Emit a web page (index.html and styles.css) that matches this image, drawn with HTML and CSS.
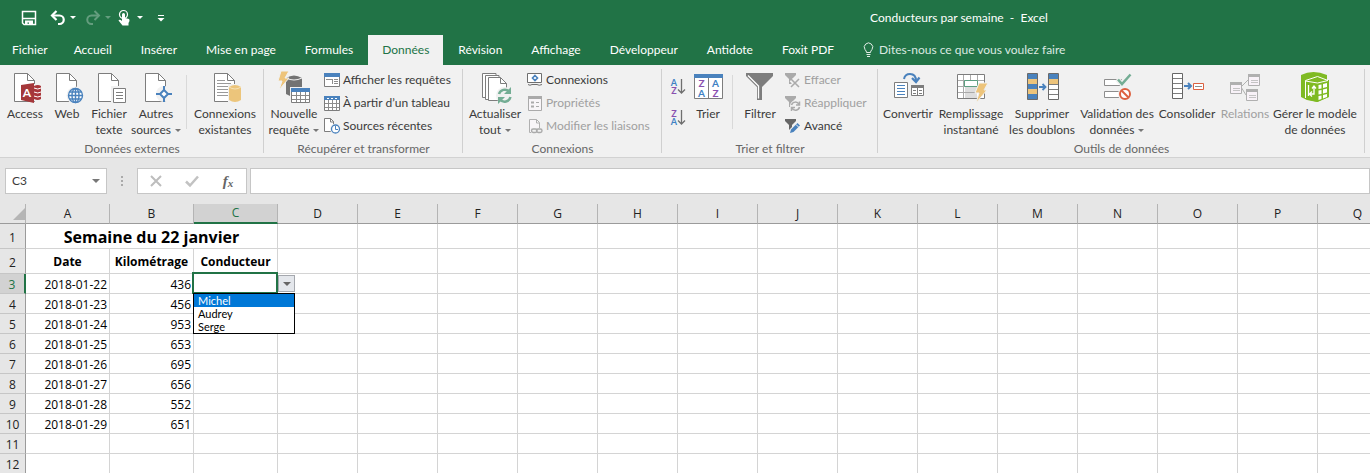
FILE: index.html
```html
<!DOCTYPE html>
<html lang="fr">
<head>
<meta charset="utf-8">
<title>Conducteurs par semaine - Excel</title>
<link rel="stylesheet" href="styles.css">
</head>
<body>
<svg class="defs" aria-hidden="true">
  <symbol id="page" viewBox="0 0 32 32"><path d="M5.500 1.500H18.500L25.500 8.500V29.500H5.500Z" fill="#fff" stroke="#7d7d7d"/><path d="M18.500 1.500V8.500H25.500" fill="none" stroke="#7d7d7d"/></symbol>
</svg>
<header class="top">
  <div class="titlebar">
    <div class="quick">
      <button aria-label="Enregistrer"><svg width="16" height="16"><path d="M1.500 1.500H14.500V14.500H3L1.500 13Z" fill="none" stroke="#fff" stroke-width="1.500"/><path d="M2 8.500H14" stroke="#fff" stroke-width="1.500"/><path d="M4 10.500H12V15H8V12.500H6.500V15H4Z" fill="#fff"/></svg></button>
      <button class="undo" aria-label="Annuler"><svg width="16" height="16"><path d="M2 5.500H9.500A4.200 4.200 0 0 1 9.500 14H8" fill="none" stroke="#fff" stroke-width="2.200"/><path d="M6.500 1 2 5.500 6.500 10" fill="none" stroke="#fff" stroke-width="2.200"/></svg><i class="tri"></i></button>
      <button class="redo" disabled aria-label="Rétablir"><svg width="16" height="16"><path d="M14 5.500H6.500A4.200 4.200 0 0 0 6.500 14H8" fill="none" stroke="#fff" stroke-width="2"/><path d="M9.500 1 14 5.500 9.500 10" fill="none" stroke="#fff" stroke-width="2"/></svg><i class="tri"></i></button>
      <button class="touch" aria-label="Mode tactile"><svg width="16" height="16"><circle cx="6.500" cy="4.500" r="4" fill="none" stroke="#fff" stroke-width="1.200"/><path d="M5 4.500A1.500 1.500 0 0 1 8 4.500V8L12 9Q12.500 9.500 12.500 11L11.500 13V15.500H5.500L1.500 10.500Q2.500 9 5 11Z" fill="#fff"/></svg><i class="tri"></i></button>
      <button class="custom" aria-label="Personnaliser"><svg width="8" height="8"><path d="M1 1.500H7" stroke="#fff"/><path d="M.5 4H7.500L4 7.500Z" fill="#fff"/></svg></button>
    </div>
    <div class="doc">Conducteurs par semaine&nbsp; -&nbsp; Excel</div>
  </div>
  <nav class="tabs">
    <button>Fichier</button><button>Accueil</button><button>Insérer</button><button>Mise en page</button><button>Formules</button><button class="on">Données</button><button>Révision</button><button>Affichage</button><button>Développeur</button><button>Antidote</button><button>Foxit PDF</button>
    <button class="tell"><svg width="11" height="16"><path d="M3.500 10.500Q3.500 9 2 7.500A4.200 4.200 0 1 1 9 7.500Q7.500 9 7.500 10.500Z" fill="none" stroke="#e4eee8"/><path d="M3.500 12.500H7.500M4 14.500H7" stroke="#e4eee8"/></svg>Dites-nous ce que vous voulez faire</button>
  </nav>
</header>

<main>
<section class="ribbon" aria-label="Données">
  <div class="group ext">
    <div class="tools">
      <button class="big"><svg width="32" height="32"><use href="#page"/><rect x="24" y="12" width="10" height="17" fill="#f1f1f1"/><path d="M25 14Q29 12 32 14V27Q29 29 25 27Z" fill="#a9373b"/><path d="M25 16Q29 18 32 16M25 20Q29 22 32 20M25 24Q29 26 32 24" fill="none" stroke="#fff"/><path d="M12 13 25 11V31L12 28Z" fill="#a4373a"/><text x="18" y="25" class="access-a">A</text></svg><span>Access</span></button>
      <button class="big"><svg width="32" height="32"><use href="#page"/><circle cx="24.500" cy="23.500" r="9" fill="#f1f1f1"/><g fill="#fff" stroke="#4a82bd" stroke-width="1.400"><circle cx="24.500" cy="23.500" r="7"/><ellipse cx="24.500" cy="23.500" rx="3.500" ry="7" fill="none"/><path d="M24.500 16.500V30.500M17.500 23.500H31.500M18.500 20H30.500M18.500 27H30.500"/></g></svg><span>Web</span></button>
      <button class="big"><svg width="32" height="32"><use href="#page"/><rect x="18" y="14" width="15" height="18" fill="#f1f1f1"/><path d="M20.500 16.500H32.500V30.500H20.500Z" fill="#fff" stroke="#7d7d7d"/><path d="M23 20.500H30M23 23.500H30M23 26.500H30" stroke="#7d7d7d"/></svg><span>Fichier<br>texte</span></button>
      <button class="big wide"><svg width="32" height="32"><use href="#page"/><circle cx="24" cy="22" r="8" fill="#f1f1f1"/><path d="M24 18 28 22 24 26 20 22Z" fill="#fff" stroke="#4a82bd" stroke-width="2"/><path d="M24 14V18M24 26V30M16 22H20M28 22H32" stroke="#4a82bd" stroke-width="2"/></svg><span>Autres<br>sources<i class="tri"></i></span></button>
      <hr>
      <button class="big exist"><svg width="32" height="32"><use href="#page"/><path d="M8 8.500H16M8 11.500H22M8 14.500H20M8 17.500H19M8 20.500H19M8 23.500H19" stroke="#9a9a9a"/><path d="M19 12H33V31H19Z" fill="#f1f1f1"/><path d="M20 15Q26 11 32 15V28Q26 32 20 28Z" fill="#ecc57b"/><path d="M20 15Q26 19 32 15" fill="none" stroke="#f7e3b7"/></svg><span>Connexions<br>existantes</span></button>
    </div>
    <h2>Données externes</h2>
  </div>
  <div class="group get">
    <div class="tools">
      <button class="big"><svg width="32" height="32"><path d="M8 6Q16 1 24 6V22Q16 27 8 22Z" fill="#737373"/><path d="M8 6Q16 10 24 6" fill="none" stroke="#f1f1f1"/><path d="M3-1H11L7 6H11L1 18 4 9H0Z" fill="#edc47b" stroke="#f1f1f1"/><path d="M12 15H33V32H12Z" fill="#f1f1f1"/><path d="M13.500 16.500H31.500V30.500H13.500Z" fill="#fff" stroke="#7d7d7d"/><path d="M13 16H32V20H13Z" fill="#4a82bd"/><path d="M14 23.500H31M14 27.500H31M18.500 20V30M22.500 20V30M27.500 20V30" stroke="#8a8a8a"/></svg><span>Nouvelle<br>requête<i class="tri"></i></span></button>
      <div class="stack">
        <button><svg width="16" height="16"><path d="M.5 1.500H15.500V14.500H.5Z" fill="#fff" stroke="#7d7d7d"/><path d="M0 1H16V5H0Z" fill="#4a82bd"/><path d="M2 7.500H8M8.500 7V12M10 7.500H14M10 9.500H14M10 11.500H14" stroke="#8d8d8d"/></svg>Afficher les requêtes</button>
        <button><svg width="16" height="16"><path d="M.5 1.500H15.500V15.500H.5Z" fill="#fff" stroke="#7d7d7d"/><path d="M0 1H16V5H0Z" fill="#4a82bd"/><path d="M3 3.500H5M7 3.500H9M11 3.500H13" stroke="#fff"/><path d="M1 8.500H15M1 12.500H15M4.500 5V15M8.500 5V15M12.500 5V15" stroke="#8d8d8d"/></svg>À partir d’un tableau</button>
        <button><svg width="16" height="16"><path d="M.5.500H6.500L9.500 3.500V13.500H.5Z" fill="#fff" stroke="#7d7d7d"/><path d="M6.500.500V4H10" fill="none" stroke="#7d7d7d"/><circle cx="11.500" cy="11" r="5.500" fill="#f1f1f1"/><circle cx="11.500" cy="11" r="4" fill="#fff" stroke="#4a82bd" stroke-width="1.300"/><path d="M11.500 8V11.500H14" fill="none" stroke="#4a82bd"/></svg>Sources récentes</button>
      </div>
    </div>
    <h2>Récupérer et transformer</h2>
  </div>
  <div class="group conn">
    <div class="tools">
      <button class="big wide"><svg width="32" height="32"><path d="M3.500 1.500H17V25.500H3.500Z" fill="#fff" stroke="#7d7d7d"/><path d="M6.500 3.500H20V27.500H6.500Z" fill="#fff" stroke="#7d7d7d"/><path d="M9.500 5.500H21.500L27.500 11.500V28.500H9.500Z" fill="#fff" stroke="#7d7d7d"/><path d="M21.500 5.500V11.500H27.500" fill="none" stroke="#7d7d7d"/><circle cx="25.500" cy="23.500" r="8.500" fill="#f1f1f1"/><g fill="none" stroke="#74ad94" stroke-width="2.500"><path d="M20 22A6 6 0 0 1 30 19.500M31.500 25A6 6 0 0 1 21 27.500"/></g><path d="M32 15V22H25ZM19 32V25H26Z" fill="#74ad94"/></svg><span>Actualiser<br>tout<i class="tri"></i></span></button>
      <div class="stack">
        <button><svg width="16" height="16"><path d="M.5 1.500H14.500V10.500H.5Z" fill="#fff" stroke="#6f6f6f"/><path d="M8 3.500 10.500 6 8 8.500 5.500 6Z" fill="#fff" stroke="#4a82bd" stroke-width="1.600"/><path d="M1 12.500Q3 14 5 12.500H10Q12 14 15 12.500" fill="none" stroke="#6f6f6f"/></svg>Connexions</button>
        <button disabled><svg width="16" height="16"><path d="M1.500 1.500H14.500V15.500H1.500Z" fill="#f8f5f8" stroke="#aaa"/><path d="M1 1H15V4H1Z" fill="#aaa"/><path d="M4 7.500H7M4 11.500H7" stroke="#aaa" stroke-width="2"/><path d="M9 7.500H12M9 11.500H12" stroke="#aaa"/></svg>Propriétés</button>
        <button disabled><svg width="16" height="16"><path d="M2.500 1.500H9.500L12.500 4.500V14.500H2.500Z" fill="#f8f5f8" stroke="#b0b0b0"/><path d="M9.500 1.500V5H12.500" fill="none" stroke="#b0b0b0"/><path d="M4 10H15V16H4Z" fill="#f1f1f1"/><rect x="4.500" y="11" width="5.500" height="3.500" rx="1.700" fill="none" stroke="#aaa" stroke-width="1.400"/><rect x="9.500" y="11" width="5.500" height="3.500" rx="1.700" fill="none" stroke="#aaa" stroke-width="1.400"/></svg>Modifier les liaisons</button>
      </div>
    </div>
    <h2>Connexions</h2>
  </div>
  <div class="group sort">
    <div class="tools">
      <div class="az">
        <button aria-label="Trier de A à Z"><svg width="16" height="20"><text x="4" y="9" class="bl">A</text><text x="4" y="17" class="pu">Z</text><path d="M11.500 2V16M8 12.500 11.500 16 15 12.500" fill="none" stroke="#6f6f6f" stroke-width="1.300"/></svg></button>
        <button aria-label="Trier de Z à A"><svg width="16" height="20"><text x="4" y="9" class="pu">Z</text><text x="4" y="17" class="bl">A</text><path d="M11.500 2V16M8 12.500 11.500 16 15 12.500" fill="none" stroke="#6f6f6f" stroke-width="1.300"/></svg></button>
      </div>
      <button class="big sorter"><svg width="32" height="32"><path d="M2.500 2.500H30.500V26.500H2.500Z" fill="#fff" stroke="#7d7d7d"/><path d="M2 2H31V6H2Z" fill="#4a82bd"/><path d="M16.500 6V26" stroke="#7d7d7d"/><text x="9.500" y="15" class="pu l">Z</text><text x="9.500" y="25" class="bl l">A</text><text x="23.500" y="15" class="bl l">A</text><text x="23.500" y="25" class="pu l">Z</text></svg><span>Trier</span></button>
      <hr>
      <button class="big filter"><svg width="32" height="32"><path d="M2 1H29V4L18 15V28H13V15L2 4Z" fill="#7d7d7d"/><path d="M4 3.500 14.500 14V26.500" fill="none" stroke="#fff" stroke-width="1.300"/></svg><span>Filtrer</span></button>
      <div class="stack">
        <button disabled><svg width="16" height="16"><path d="M0 1H11V3L7 7V12H4V7L0 3Z" fill="#aaa"/><path d="M6 8 14 15M14 7 6 15" stroke="#f1f1f1" stroke-width="4"/><path d="M6 7 14 15M14 7 6 15" stroke="#aaa" stroke-width="1.600"/></svg>Effacer</button>
        <button disabled><svg width="16" height="16"><path d="M0 1H11V3L7 7V12H4V7L0 3Z" fill="#aaa"/><circle cx="10.500" cy="11" r="5.500" fill="#f1f1f1"/><path d="M6.500 10A4 4 0 0 1 14 9.500M14.500 6.500V10H11M14.500 12A4 4 0 0 1 7 13M6.500 16V12.500H10" fill="none" stroke="#aaa" stroke-width="1.500"/></svg>Réappliquer</button>
        <button><svg width="16" height="16"><path d="M0 1H11V3L7 7V12H4V7L0 3Z" fill="#666"/><path d="M5 14.500 14 5.500" stroke="#f1f1f1" stroke-width="5"/><path d="M5 15 6 11.500 12.500 5 15 7.500 8.500 14Z" fill="#4a82bd"/><path d="M11 6.500 13.500 9" stroke="#f1f1f1"/></svg>Avancé</button>
      </div>
    </div>
    <h2>Trier et filtrer</h2>
  </div>
  <div class="group data">
    <div class="tools">
      <button class="big b1"><svg width="32" height="32"><path d="M2.500 10.500H15.500V25.500H2.500Z" fill="#fff" stroke="#7d7d7d"/><path d="M5 13.500H13M5 16.500H13M5 19.500H13M5 22.500H13" stroke="#4a82bd"/><path d="M19.500 13.500H31.500V23.500H19.500Z" fill="#fff" stroke="#7d7d7d"/><path d="M19 13H32V16H19Z" fill="#7d7d7d"/><path d="M21 18.500H24M27 18.500H30M21 21.500H24M27 21.500H30M25.500 16V24" stroke="#7d7d7d"/><path d="M12 7Q13 2 18 2Q24 2 24 9" fill="none" stroke="#4a82bd" stroke-width="2"/><path d="M20 6 24 10 27.500 5.500" fill="none" stroke="#4a82bd" stroke-width="2.200"/></svg><span>Convertir</span></button>
      <button class="big b2"><svg width="32" height="32"><path d="M2.500 2.500H29.500V26.500H2.500Z" fill="#fff" stroke="#7d7d7d"/><path d="M10 14H22V26H10Z" fill="#ddd"/><path d="M3 8.500H29M3 14.500H29M3 20.500H29M8.500 3V26M22.500 3V8M15.500 3V8" stroke="#aaa"/><path d="M9.500 8.500H22.500V14.500H9.500Z" fill="#fff" stroke="#5d9f81"/><path d="M24 11H33L29 18H32L21 31 24 21H20Z" fill="#edc47b" stroke="#f1f1f1"/></svg><span>Remplissage<br>instantané</span></button>
      <button class="big b3"><svg width="33" height="32"><path d="M1.500 1.500H11.500V27.500H1.500Z" fill="#4a82bd" stroke="#6a6a6a"/><path d="M2 7H11V12H2ZM2 17H11V22H2Z" fill="#edc47b"/><path d="M22.500 1.500H32.500V27.500H22.500Z" fill="#fff" stroke="#6a6a6a"/><path d="M23 2H32V7H23Z" fill="#4a82bd"/><path d="M23 7H32V12H23Z" fill="#edc47b"/><path d="M23 12.500H32M23 17.500H32M23 22.500H32" stroke="#7d7d7d"/><path d="M13 15H19M16.500 12 19.500 15 16.500 18" fill="none" stroke="#4a82bd" stroke-width="1.800"/></svg><span>Supprimer<br>les doublons</span></button>
      <button class="big b4"><svg width="32" height="32"><path d="M3.500 7.500H20.500V13.500H3.500ZM3.500 19.500H20.500V25.500H3.500Z" fill="#fff" stroke="#8d8d8d"/><path d="M16 7 21 12 30 2" fill="none" stroke="#f1f1f1" stroke-width="5"/><path d="M17 7.500 21 12 29.500 2.500" fill="none" stroke="#74ad94" stroke-width="2.500"/><circle cx="24" cy="22" r="7" fill="#f1f1f1"/><circle cx="24" cy="22" r="5" fill="#fff" stroke="#dd6140" stroke-width="2"/><path d="M20.500 18.500 27.500 25.500" stroke="#dd6140" stroke-width="2"/></svg><span>Validation des<br>données<i class="tri"></i></span></button>
      <button class="big b5"><svg width="33" height="32"><path d="M1.500 1.500H11.500V26.500H1.500Z" fill="#fff" stroke="#666"/><path d="M2 6.500H11M2 11.500H11M2 16.500H11M2 21.500H11" stroke="#7d7d7d"/><path d="M13 14H20M17 11 20 14 17 17" fill="none" stroke="#4a82bd" stroke-width="2"/><path d="M22.500 11.500H32.500V17.500H22.500Z" fill="#fff" stroke="#dd6140"/><path d="M24 14.500H31" stroke="#8d8d8d"/></svg><span>Consolider</span></button>
      <button class="big b6" disabled><svg width="32" height="32"><path d="M12 15 19 8M12 15 17 23" stroke="#b0b0b0"/><g fill="#f8f2f8" stroke="#b0b0b0"><path d="M1.500 10.500H12.500V21.500H1.500ZM19.500 2.500H30.500V13.500H19.500ZM17.500 17.500H28.500V28.500H17.500Z"/></g><path d="M1 10H13V13H1ZM19 2H31V5H19ZM17 17H29V20H17Z" fill="#b0b0b0"/><path d="M4 16.500H11M4 18.500H11M22 8.500H29M22 10.500H29M20 23.500H27M20 25.500H27" stroke="#c4c4c4"/></svg><span>Relations</span></button>
      <button class="big b7"><svg width="32" height="32"><path d="M2 3Q14-3 28 3V8H30V25L18 30 8 28 2 25Z" fill="#7fba23"/><path d="M6.500 8.500 18.500 4.500 29.500 8.500V25L18.500 30 6.500 27Z" fill="#7fba23"/><path d="M6.500 26V8.500L18.500 4.500 29 8.500" fill="none" stroke="#fff"/><path d="M6.500 9 18.500 11 29 8.500" fill="none" stroke="#fff"/><path d="M19.500 13 22.500 12.500V16.500L19.500 17ZM24 12 28 11V15L24 16ZM19.500 18.500 22.500 18V22L19.500 22.500ZM24 17.500 28 16.500V20.500L24 21.500ZM19.500 24 22.500 23.500V27L19.500 28ZM24 23 28 22V25L24 26.500Z" fill="#fff"/><path d="M9.500 13V24M13 16.500 15 14 17 16.500M15 14V22H11M13 19.500 10.500 22 13 24.500" fill="none" stroke="#fff" stroke-width="1.300"/></svg><span>Gérer le modèle<br>de données</span></button>
    </div>
    <h2>Outils de données</h2>
  </div>
</section>

<section class="formula" aria-label="Barre de formule">
  <div class="name"><input aria-label="Zone Nom" value="C3"><button aria-label="Noms définis"><i class="tri"></i></button></div>
  <div class="grip"><i></i><i></i><i></i></div>
  <div class="edit">
    <button aria-label="Annuler la saisie"><svg width="14" height="14"><path d="M2 2 12 12M12 2 2 12" stroke="#bdbdbd" stroke-width="2"/></svg></button>
    <button aria-label="Valider"><svg width="14" height="14"><path d="M1 7.500 5 11.500 13 2.500" fill="none" stroke="#c2c2c2" stroke-width="2.500"/></svg></button>
    <button aria-label="Insérer une fonction" class="fx">f<small>x</small></button>
  </div>
  <input class="bar" aria-label="Formule">
</section>

<div class="sheet">
<table>
  <colgroup><col class="rh"><col class="w"><col class="w"><col class="w"><col span="14"></colgroup>
  <thead><tr><th class="corner"><svg width="12" height="12"><path d="M12 0V12H0Z" fill="#b5b5b5"/></svg></th><th>A</th><th>B</th><th class="sel">C</th><th>D</th><th>E</th><th>F</th><th>G</th><th>H</th><th>I</th><th>J</th><th>K</th><th>L</th><th>M</th><th>N</th><th>O</th><th>P</th><th>Q</th></tr></thead>
  <tbody>
    <tr class="tall"><th>1</th><td colspan="3" class="title">Semaine du 22 janvier</td><td></td><td></td><td></td><td></td><td></td><td></td><td></td><td></td><td></td><td></td><td></td><td></td><td></td><td></td></tr>
    <tr class="tall head"><th>2</th><td>Date</td><td>Kilométrage</td><td>Conducteur</td><td></td><td></td><td></td><td></td><td></td><td></td><td></td><td></td><td></td><td></td><td></td><td></td><td></td><td></td></tr>
    <tr><th class="sel">3</th><td>2018-01-22</td><td>436</td><td class="active"><button class="drop" aria-label="Choisir un conducteur"><i class="tri"></i></button><select class="list" size="3" aria-label="Conducteur"><option class="hot">Michel</option><option>Audrey</option><option>Serge</option></select></td><td></td><td></td><td></td><td></td><td></td><td></td><td></td><td></td><td></td><td></td><td></td><td></td><td></td><td></td></tr>
    <tr><th>4</th><td>2018-01-23</td><td>456</td><td></td><td></td><td></td><td></td><td></td><td></td><td></td><td></td><td></td><td></td><td></td><td></td><td></td><td></td><td></td></tr>
    <tr><th>5</th><td>2018-01-24</td><td>953</td><td></td><td></td><td></td><td></td><td></td><td></td><td></td><td></td><td></td><td></td><td></td><td></td><td></td><td></td><td></td></tr>
    <tr><th>6</th><td>2018-01-25</td><td>653</td><td></td><td></td><td></td><td></td><td></td><td></td><td></td><td></td><td></td><td></td><td></td><td></td><td></td><td></td><td></td></tr>
    <tr><th>7</th><td>2018-01-26</td><td>695</td><td></td><td></td><td></td><td></td><td></td><td></td><td></td><td></td><td></td><td></td><td></td><td></td><td></td><td></td><td></td></tr>
    <tr><th>8</th><td>2018-01-27</td><td>656</td><td></td><td></td><td></td><td></td><td></td><td></td><td></td><td></td><td></td><td></td><td></td><td></td><td></td><td></td><td></td></tr>
    <tr><th>9</th><td>2018-01-28</td><td>552</td><td></td><td></td><td></td><td></td><td></td><td></td><td></td><td></td><td></td><td></td><td></td><td></td><td></td><td></td><td></td></tr>
    <tr><th>10</th><td>2018-01-29</td><td>651</td><td></td><td></td><td></td><td></td><td></td><td></td><td></td><td></td><td></td><td></td><td></td><td></td><td></td><td></td><td></td></tr>
    <tr><th>11</th><td></td><td></td><td></td><td></td><td></td><td></td><td></td><td></td><td></td><td></td><td></td><td></td><td></td><td></td><td></td><td></td><td></td></tr>
    <tr><th>12</th><td></td><td></td><td></td><td></td><td></td><td></td><td></td><td></td><td></td><td></td><td></td><td></td><td></td><td></td><td></td><td></td><td></td></tr>
  </tbody>
</table>
</div>
</main>
</body>
</html>
```
FILE: styles.css
```css
* { box-sizing: border-box; }
html, body { height: 100%; }
body { margin: 0; overflow: hidden; background: #e6e6e6; color: #3b3b3b; font: 12px/16px Lato, "Open Sans", sans-serif; }
button, input, select { font: inherit; color: inherit; border: 0; padding: 0; margin: 0; background: none; border-radius: 0; outline: 0; }
button { white-space: nowrap; }
svg { display: block; flex: none; overflow: visible; }
.defs { position: absolute; width: 0; height: 0; }
.tri { display: inline-block; border: 3px solid transparent; border-top-color: currentColor; border-bottom: 0; }

.top { background: #217346; color: #fff; }
.titlebar { display: grid; grid-template-columns: 40% 60%; height: 35px; align-items: center; }
.quick { display: flex; padding-left: 21px; align-items: center; }
.quick button { display: flex; align-items: center; gap: 4px; }
.quick .undo { margin-left: 13px; }
.quick .redo { margin-left: 9px; opacity: .3; }
.quick .touch { margin-left: 6px; }
.quick .custom { margin-left: 14px; }
.doc { text-align: center; }
.tabs { display: flex; height: 30px; gap: 1px; }
.tabs button { padding: 0 14px; }
.tabs button:first-child { padding: 0 11px 0 12px; }
.tabs .on { background: #f1f1f1; color: #217346; }
.tabs .tell { display: flex; align-items: center; gap: 5px; color: #dbe9e1; }

.ribbon { display: flex; height: 93px; background: #f1f1f1; border-bottom: 1px solid #d2d2d2; }
.group { position: relative; display: flex; flex-direction: column; flex: none; padding-top: 3px; }
.group::after { content: ""; position: absolute; right: 0; top: 4px; bottom: 4px; width: 1px; background: #d0d0d0; }
.ext { width: 264px; }
.get { width: 199px; }
.conn { width: 199px; }
.sort { width: 216px; }
.data { width: 487px; }
.tools { display: flex; height: 73px; padding-left: 6px; }
.ext .tools { padding-left: 4px; }
.sort .tools { padding-left: 8px; }
.data .tools { padding-left: 2px; }
.group h2 { margin: 0; font-size: 12px; font-weight: 400; line-height: 16px; text-align: center; color: #666; }
.big { display: flex; flex-direction: column; align-items: center; width: 42px; padding-top: 4px; gap: 2px; }
.big span { text-align: center; }
.big .tri { margin: 0 0 2px 4px; color: #777; }
.wide { width: 52px; }
.exist { width: 68px; }
.get .big { width: 48px; }
.sort .sorter { width: 32px; margin-left: 6px; }
.sort .filter { width: 42px; margin-left: 2px; }
.b1 { width: 56px; } .b2 { width: 70px; } .b3 { width: 72px; } .b4 { width: 78px; } .b5 { width: 62px; } .b6 { width: 54px; } .b7 { width: 86px; }
.tools hr { width: 1px; height: 54px; margin: 7px 4px; border: 0; background: #d9d9d9; }
.sort hr { margin-left: 8px; }
.stack { display: flex; flex-direction: column; margin-left: 6px; }
.sort .stack { margin-left: 4px; }
.stack button { display: flex; align-items: center; height: 23px; gap: 3px; }
button:disabled { color: #a0a0a0; }
.top button:disabled { color: #fff; }
.az { display: flex; flex-direction: column; gap: 11px; padding-top: 9px; }
svg text { font: bold 9px Lato, sans-serif; text-anchor: middle; }
svg .l { font-size: 10px; }
svg .access-a { font-size: 12px; fill: #fff; }
.bl { fill: #3f82c4; }
.pu { fill: #8a51b0; }

.formula { display: flex; height: 46px; padding: 10px 0; }
.formula > * { height: 26px; }
.name { display: flex; width: 102px; margin-left: 5px; background: #fff; border: 1px solid #c6c6c6; align-items: center; }
.name input { flex: 1; min-width: 0; padding-left: 6px; }
.name button { display: flex; justify-content: center; width: 20px; color: #777; }
.name .tri { border-width: 4px 4px 0; }
.grip { width: 30px; display: flex; flex-direction: column; align-items: center; justify-content: center; gap: 2px; }
.grip i { width: 2px; height: 2px; background: #aaa; }
.edit { display: flex; width: 110px; background: #fff; border: 1px solid #c6c6c6; }
.edit button { flex: 1; display: flex; align-items: center; justify-content: center; }
.edit .fx { font: italic bold 15px "Liberation Serif", serif; color: #666; }
.fx small { font-size: 11px; padding-top: 4px; }
.bar { flex: 1; min-width: 0; margin-left: 3px; background: #fff; border: 1px solid #c6c6c6; }

.sheet { overflow: hidden; }
table { width: 1398px; table-layout: fixed; border-collapse: separate; border-spacing: 0; background: #fff; color: #000; font-family: "Open Sans", sans-serif; }
col { width: 80px; }
.rh { width: 26px; }
.w { width: 84px; }
tr { height: 20px; }
.tall { height: 25px; }
th, td { padding: 2px 2px 0; border-right: 1px solid #d4d4d4; border-bottom: 1px solid #d4d4d4; white-space: nowrap; line-height: 16px; }
th { font-weight: 400; background: #e6e6e6; color: #222; }
thead th { padding: 0; border-right-color: #b4b4b4; border-bottom-color: #9b9b9b; }
tbody th { border-right-color: #9b9b9b; border-bottom-color: #c6c6c6; padding: 2px 0 0; }
.tall th { vertical-align: bottom; padding-bottom: 2px; }
.corner svg { margin-left: auto; }
thead .sel { background: #d2d2d2; color: #217346; border-bottom: 2px solid #217346; }
tbody .sel { background: #d2d2d2; color: #217346; border-right: 2px solid #217346; }
td { text-align: right; }
.title { font-size: 16px; font-weight: 700; text-align: center; line-height: 20px; }
.head td { font-weight: 700; text-align: center; }
.active { position: relative; }
.active::before { content: ""; position: absolute; inset: -2px -1px -1px -2px; border: 2px solid #217346; }
.drop { position: absolute; left: 84px; top: 1px; width: 17px; height: 17px; background: #e4e7ec; border: 1px solid #a5a8ae; color: #666; display: flex; align-items: center; justify-content: center; }
.drop .tri { border-width: 4px 4px 0; }
.list { position: absolute; z-index: 1; left: -1px; top: 19px; width: 102px; height: 41px; background: #fff; border: 1px solid #000; overflow: hidden; font-family: Lato, sans-serif; font-size: 11px; color: #000; }
.list option { padding: 0 4px; height: 13px; min-height: 13px; }
.list .hot { background: #0078d7; color: #fff; }
```
